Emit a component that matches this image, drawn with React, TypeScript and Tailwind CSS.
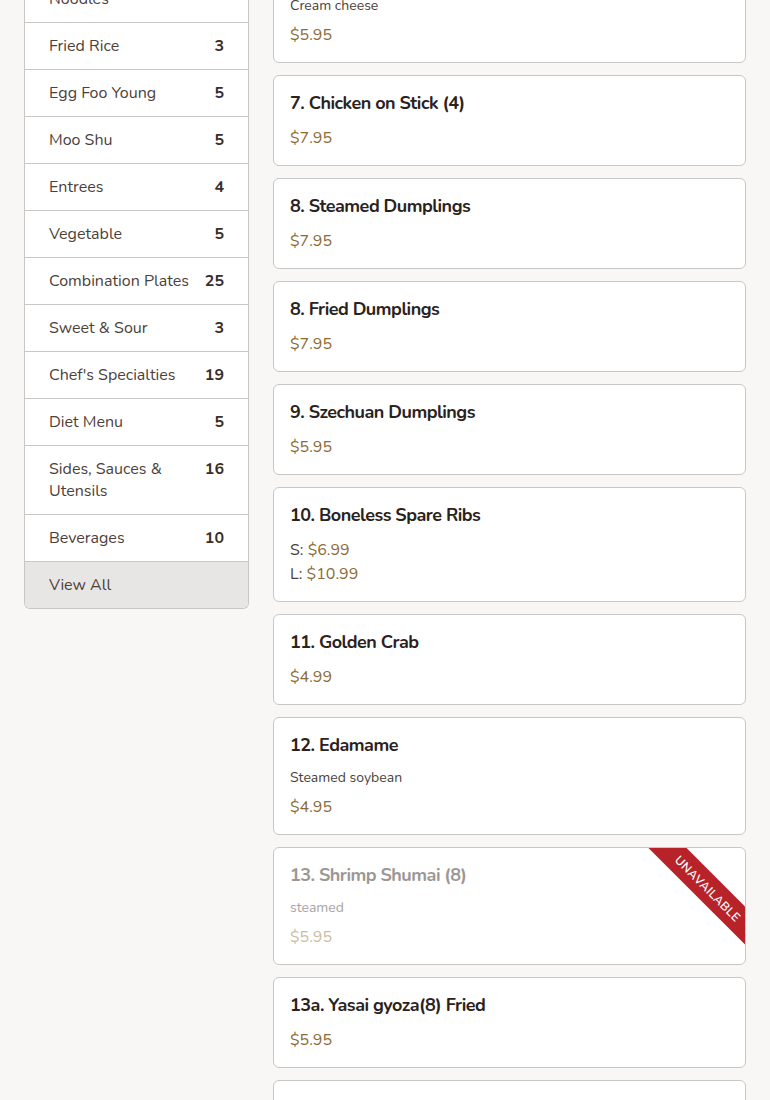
import React from 'react';

type Category = { name: string; count?: number };
type Item = {
  title: string;
  desc?: string;
  prices: { label?: string; value: string }[];
  unavailable?: boolean;
};

const categories: Category[] = [
  { name: 'Lo Mein & Rice Noodles', count: 6 },
  { name: 'Fried Rice', count: 3 },
  { name: 'Egg Foo Young', count: 5 },
  { name: 'Moo Shu', count: 5 },
  { name: 'Entrees', count: 4 },
  { name: 'Vegetable', count: 5 },
  { name: 'Combination Plates', count: 25 },
  { name: 'Sweet & Sour', count: 3 },
  { name: "Chef's Specialties", count: 19 },
  { name: 'Diet Menu', count: 5 },
  { name: 'Sides, Sauces & Utensils', count: 16 },
  { name: 'Beverages', count: 10 },
];

const items: Item[] = [
  { title: '6. Crab Rangoon (6)', desc: 'Cream cheese', prices: [{ value: '$5.95' }] },
  { title: '7. Chicken on Stick (4)', prices: [{ value: '$7.95' }] },
  { title: '8. Steamed Dumplings', prices: [{ value: '$7.95' }] },
  { title: '8. Fried Dumplings', prices: [{ value: '$7.95' }] },
  { title: '9. Szechuan Dumplings', prices: [{ value: '$5.95' }] },
  {
    title: '10. Boneless Spare Ribs',
    prices: [
      { label: 'S', value: '$6.99' },
      { label: 'L', value: '$10.99' },
    ],
  },
  { title: '11. Golden Crab', prices: [{ value: '$4.99' }] },
  { title: '12. Edamame', desc: 'Steamed soybean', prices: [{ value: '$4.95' }] },
  { title: '13. Shrimp Shumai (8)', desc: 'steamed', prices: [{ value: '$5.95' }], unavailable: true },
  { title: '13a. Yasai gyoza(8) Fried', prices: [{ value: '$5.95' }] },
  { title: '14. Vegetable Spring Roll (2)', prices: [{ value: '$3.95' }] },
];

const MenuCard = ({ item }: { item: Item }) => {
  const off = item.unavailable;
  return (
    <div className="relative overflow-hidden bg-white border border-[#c9c7c5] rounded-md px-4 py-[15px]">
      <h3 className={`text-[18px] leading-6 font-bold tracking-[-0.5px] mb-[11px] ${off ? 'text-[#9b9794]' : 'text-[#2b2220]'}`}>
        {item.title}
      </h3>
      {item.desc && (
        <p className={`text-[14px] leading-5 mb-[7px] ${off ? 'text-[#a8a4a1]' : 'text-[#4a3f3a]'}`}>{item.desc}</p>
      )}
      {item.prices.map((p, i) => (
        <div key={i} className="text-[16px] leading-6">
          {p.label && <span className={off ? 'text-[#a8a4a1]' : 'text-[#4a3f3a]'}>{p.label}: </span>}
          <span className={off ? 'text-[#cbbd9f]' : 'text-[#8b6a35]'}>{p.value}</span>
        </div>
      ))}
      {off && (
        <div className="absolute top-[27px] right-[-38px] w-[150px] h-[27px] rotate-45 bg-[#b8232a] flex items-center justify-center">
          <span className="text-white text-[12px] font-semibold uppercase tracking-[0.4px]">Unavailable</span>
        </div>
      )}
    </div>
  );
};

export default function App() {
  return (
    <div
      className="h-[1100px] overflow-hidden bg-[#f8f7f5] text-[#4a3f3a]"
      style={{ fontFamily: '"Nunito", "Lato", "Noto Sans", sans-serif' }}
    >
      <div className="flex items-start gap-6 px-6">
        {/* 分类列表 */}
        <aside className="w-[225px] shrink-0 -mt-[47px] bg-white border border-[#c9c7c5] border-t-0 rounded-b-md overflow-hidden">
          {categories.map((c) => (
            <div key={c.name} className="flex items-start justify-between gap-3 px-6 py-3 border-t border-[#c9c7c5] text-[16px] leading-[22px]">
              <span className="text-[#4d3f3a]">{c.name}</span>
              <span className="font-bold text-[#3a2e2a]">{c.count}</span>
            </div>
          ))}
          <div className="px-6 py-3 border-t border-[#c9c7c5] bg-[#e8e6e4] text-[16px] leading-[22px] text-[#4d3f3a]">
            View All
          </div>
        </aside>

        {/* 菜品列表 */}
        <main className="flex-1 -mt-[55px] flex flex-col gap-3">
          {items.map((item) => (
            <MenuCard key={item.title} item={item} />
          ))}
        </main>
      </div>
    </div>
  );
}
